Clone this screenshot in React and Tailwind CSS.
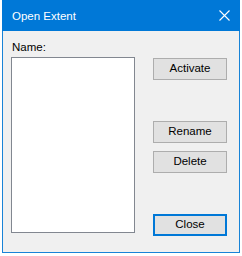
export default function App() {
  const font = { fontFamily: '"Liberation Sans", Arial, sans-serif' };
  const btn =
    "w-[74px] h-[22px] flex items-center justify-center bg-[#e1e1e1] border border-[#adadad] text-[11.5px] text-black";
  return (
    <div className="w-[242px] h-[256px] bg-white" style={font}>
      <div className="ml-[2px] w-[238px] h-[253px] flex flex-col">
        <div className="h-[31px] bg-[#0078d7] flex items-center justify-between pl-[10px] pr-[10px]">
          <span className="text-white text-[11.5px] leading-[14px]">Open Extent</span>
          <svg width="11" height="11" viewBox="0 0 11 11" className="block">
            <path d="M0.5 0.5 L10.5 10.5 M10.5 0.5 L0.5 10.5" stroke="#ffffff" strokeWidth="1.1" fill="none" />
          </svg>
        </div>
        <div className="flex-1 bg-[#f0f0f0] border-x border-b border-[#1883d7] flex pl-[8px] pr-[12px] pt-[9px]">
          <div className="flex flex-col">
            <span className="text-[11.5px] leading-[14px] text-black pl-[1px]">Name:</span>
            <div className="mt-[3px] w-[124px] h-[176px] bg-white border border-[#828790]" />
          </div>
          <div className="ml-[18px] flex flex-col pt-[18px]">
            <div className={btn}>Activate</div>
            <div className={btn + " mt-[41px]"}>Rename</div>
            <div className={btn + " mt-[8px]"}>Delete</div>
            <div className="mt-[41px] w-[74px] h-[22px] flex items-center justify-center bg-[#e1e1e1] border-2 border-[#0078d7] text-[11.5px] text-black">
              Close
            </div>
          </div>
        </div>
      </div>
    </div>
  );
}
